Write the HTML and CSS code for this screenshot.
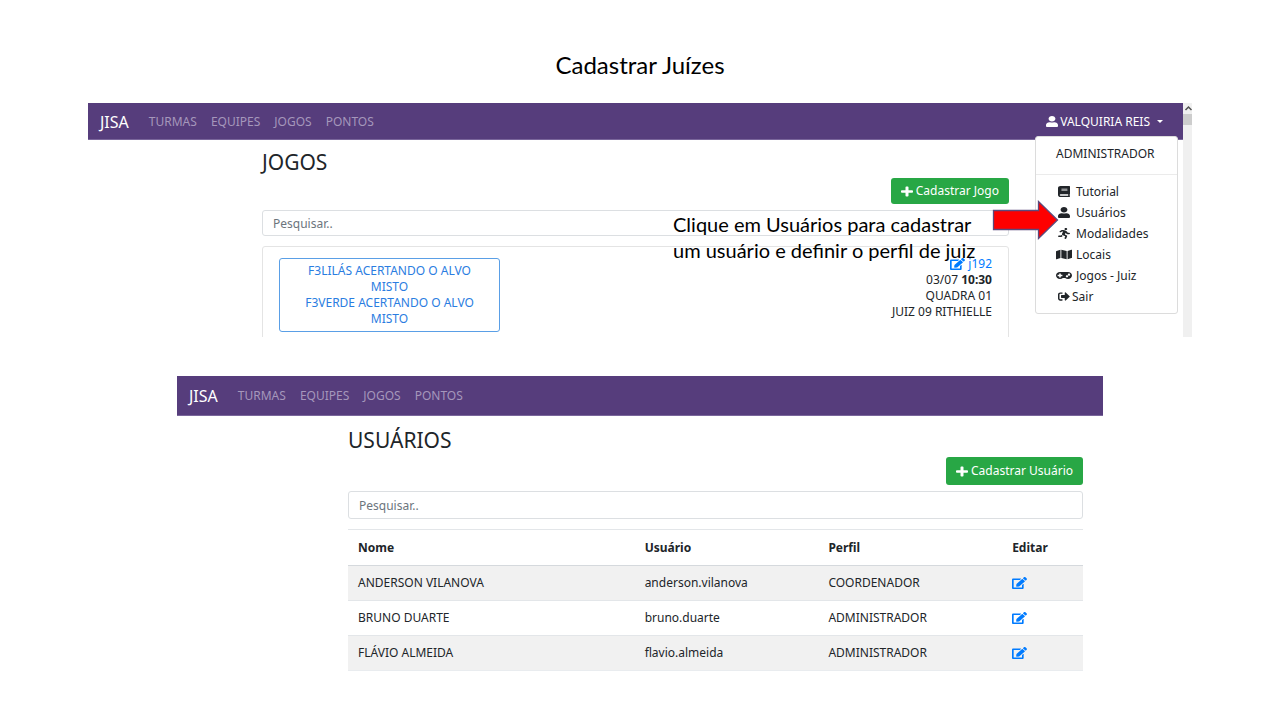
FILE: index.html
```html
<!DOCTYPE html>
<html lang="pt-BR">
<head>
<meta charset="utf-8">
<meta name="viewport" content="width=device-width, initial-scale=1">
<title>Cadastrar Juízes</title>
<link rel="stylesheet" href="styles.css">
</head>
<body>
<svg class="sprite" aria-hidden="true">
  <symbol id="user" viewBox="0 0 448 512" preserveAspectRatio="none"><path d="M224 256c70.7 0 128-57.3 128-128S294.7 0 224 0 96 57.3 96 128s57.3 128 128 128zm89.6 32h-16.7c-22.2 10.2-46.9 16-72.9 16s-50.6-5.8-72.9-16h-16.7C60.2 288 0 348.2 0 422.4V464c0 26.5 21.5 48 48 48h352c26.5 0 48-21.5 48-48v-41.6c0-74.2-60.2-134.4-134.4-134.4z"/></symbol>
  <symbol id="edit" viewBox="0 0 576 512" preserveAspectRatio="none"><path d="M402.6 83.2l90.2 90.2c3.8 3.8 3.8 10 0 13.8L274.4 405.6l-92.8 10.3c-12.4 1.4-22.9-9.1-21.5-21.5l10.3-92.8L388.8 83.2c3.8-3.8 10-3.8 13.8 0zm162-22.9l-48.8-48.8c-15.2-15.2-39.9-15.2-55.2 0l-35.4 35.4c-3.8 3.8-3.8 10 0 13.8l90.2 90.2c3.8 3.8 10 3.8 13.8 0l35.4-35.4c15.2-15.3 15.2-40 0-55.2zM384 346.2V448H64V128h229.8c3.2 0 6.2-1.3 8.5-3.5l40-40c7.6-7.6 2.2-20.5-8.5-20.5H48C21.5 64 0 85.5 0 112v352c0 26.5 21.5 48 48 48h352c26.5 0 48-21.5 48-48V306.2c0-10.7-12.9-16-20.5-8.5l-40 40c-2.2 2.3-3.5 5.3-3.5 8.5z"/></symbol>
  <symbol id="plus" viewBox="0 0 448 512" preserveAspectRatio="none"><path d="M416 200H280V56c0-17.67-14.33-32-32-32h-48c-17.67 0-32 14.33-32 32v144H32c-17.67 0-32 14.33-32 32v48c0 17.67 14.33 32 32 32h136v144c0 17.67 14.33 32 32 32h48c17.67 0 32-14.33 32-32V312h136c17.67 0 32-14.33 32-32v-48c0-17.67-14.33-32-32-32z"/></symbol>
  <symbol id="book" viewBox="0 0 448 512" preserveAspectRatio="none"><path d="M448 360V24c0-13.3-10.7-24-24-24H96C43 0 0 43 0 96v320c0 53 43 96 96 96h328c13.3 0 24-10.7 24-24v-16c0-7.5-3.5-14.3-8.9-18.7-4.2-15.4-4.2-59.3 0-74.7 5.4-4.3 8.9-11.1 8.9-18.6zM128 134c0-3.3 2.7-6 6-6h212c3.3 0 6 2.7 6 6v20c0 3.3-2.7 6-6 6H134c-3.3 0-6-2.7-6-6v-20zm0 64c0-3.3 2.7-6 6-6h212c3.3 0 6 2.7 6 6v20c0 3.3-2.7 6-6 6H134c-3.3 0-6-2.7-6-6v-20zm253.4 250H96c-17.7 0-32-14.3-32-32 0-17.6 14.4-32 32-32h285.4c-1.9 17.1-1.9 46.9 0 64z"/></symbol>
  <symbol id="running" viewBox="0 0 416 512" preserveAspectRatio="none"><path d="M272 96c26.51 0 48-21.49 48-48S298.51 0 272 0s-48 21.49-48 48 21.49 48 48 48zM113.69 317.47l-14.8 34.52H32c-17.67 0-32 14.33-32 32s14.33 32 32 32h77.45c19.25 0 36.58-11.44 44.11-29.09l8.79-20.52-10.67-6.3c-17.32-10.23-30.06-25.37-37.99-42.61zM384 223.99h-44.03l-26.06-53.25c-12.5-25.55-35.45-44.23-61.78-50.94l-71.08-21.14c-28.3-6.8-57.77-.55-80.84 17.14l-39.67 30.41c-14.03 10.75-16.69 30.83-5.92 44.86s30.84 16.66 44.86 5.92l39.69-30.41c7.67-5.89 17.44-8 25.27-6.14l14.7 4.37-37.46 87.39c-12.62 29.48-1.31 64.01 26.3 80.31l84.98 50.17-27.47 87.73c-5.28 16.86 4.11 34.82 20.97 40.09 3.19 1 6.41 1.48 9.58 1.48 13.61 0 26.23-8.77 30.52-22.45l31.64-101.06c5.91-20.77-2.89-43.08-21.64-54.39l-61.24-36.14 31.31-78.28 20.27 41.43c8 16.34 24.92 26.89 43.11 26.89H384c17.67 0 32-14.33 32-32s-14.33-31.99-32-31.99z"/></symbol>
  <symbol id="map" viewBox="0 0 576 512" preserveAspectRatio="none"><path d="M0 117.66v346.32c0 11.32 11.43 19.06 21.94 14.86L160 416V32L20.12 87.95A32.006 32.006 0 0 0 0 117.66zM192 416l192 64V96L192 32v384zM554.06 33.16L416 96v384l139.88-55.95A31.996 31.996 0 0 0 576 394.34V48.02c0-11.32-11.43-19.06-21.94-14.86z"/></symbol>
  <symbol id="gamepad" viewBox="0 0 640 512" preserveAspectRatio="none"><path d="M480 96H160C71.6 96 0 167.6 0 256s71.6 160 160 160c44.8 0 85.2-18.4 114.2-48h91.5c29 29.6 69.5 48 114.2 48 88.4 0 160-71.6 160-160S568.4 96 480 96zM256 276c0 6.6-5.4 12-12 12h-52v52c0 6.6-5.4 12-12 12h-40c-6.6 0-12-5.4-12-12v-52H76c-6.6 0-12-5.4-12-12v-40c0-6.6 5.4-12 12-12h52v-52c0-6.6 5.4-12 12-12h40c6.6 0 12 5.4 12 12v52h52c6.6 0 12 5.4 12 12v40zm184 68c-26.5 0-48-21.5-48-48s21.5-48 48-48 48 21.5 48 48-21.5 48-48 48zm80-80c-26.5 0-48-21.5-48-48s21.5-48 48-48 48 21.5 48 48-21.5 48-48 48z"/></symbol>
  <symbol id="signout" viewBox="0 0 512 512" preserveAspectRatio="none"><path d="M497 273L329 441c-15 15-41 4.5-41-17v-96H152c-13.3 0-24-10.7-24-24v-96c0-13.3 10.7-24 24-24h136V88c0-21.4 25.9-32 41-17l168 168c9.3 9.4 9.3 24.6 0 34zM192 436v-40c0-6.6-5.4-12-12-12H96c-17.7 0-32-14.3-32-32V160c0-17.7 14.3-32 32-32h84c6.6 0 12-5.4 12-12V76c0-6.6-5.4-12-12-12H96c-53 0-96 43-96 96v192c0 53 43 96 96 96h84c6.6 0 12-5.4 12-12z"/></symbol>
</svg>

<h1 class="slide-title">Cadastrar Juízes</h1>

<section class="shot shot-games">
  <div class="screen">
    <header class="navbar">
      <a class="brand" href="#">JISA</a>
      <nav class="nav-links"><a href="#">TURMAS</a><a href="#">EQUIPES</a><a href="#">JOGOS</a><a href="#">PONTOS</a></nav>
      <button class="account" type="button" aria-expanded="true"><svg class="icon"><use href="#user"/></svg>VALQUIRIA REIS<span class="caret"></span></button>
    </header>
    <main class="content">
      <h2>JOGOS</h2>
      <div class="actions"><button class="btn-add" type="button"><svg class="icon"><use href="#plus"/></svg>Cadastrar Jogo</button></div>
      <input class="search" type="text" placeholder="Pesquisar.." aria-label="Pesquisar jogos">
      <article class="card">
        <button class="match" type="button">F3LILÁS ACERTANDO O ALVO MISTO<br>F3VERDE ACERTANDO O ALVO MISTO</button>
        <div class="details">
          <a href="#"><svg class="icon icon-edit"><use href="#edit"/></svg> j192</a>
          <span>03/07 <b>10:30</b></span>
          <span>QUADRA 01</span>
          <span>JUIZ 09 RITHIELLE</span>
        </div>
      </article>
    </main>
    <div class="dropdown">
      <div class="role">ADMINISTRADOR</div>
      <ul>
        <li><a href="#"><span class="slot"><svg class="icon"><use href="#book"/></svg></span>Tutorial</a></li>
        <li><a href="#"><span class="slot"><svg class="icon"><use href="#user"/></svg></span>Usuários</a></li>
        <li><a href="#"><span class="slot"><svg class="icon"><use href="#running"/></svg></span>Modalidades</a></li>
        <li><a href="#"><span class="slot"><svg class="icon icon-wide"><use href="#map"/></svg></span>Locais</a></li>
        <li><a href="#"><span class="slot"><svg class="icon icon-wide"><use href="#gamepad"/></svg></span>Jogos - Juiz</a></li>
        <li><a class="exit" href="#"><span class="slot"><svg class="icon"><use href="#signout"/></svg></span>Sair</a></li>
      </ul>
    </div>
  </div>
  <div class="scrollbar" aria-hidden="true"><svg class="up" viewBox="0 0 9 11"><path d="M2.5 7L5.5 4l3 3" fill="none" stroke="#505050" stroke-width="1.5"/></svg><div class="thumb"></div></div>
  <p class="note">Clique em Usuários para cadastrar um usuário e definir o perfil de juiz</p>
  <svg class="arrow" viewBox="0 0 66 40" aria-hidden="true"><path d="M1 10.5H46V1.5L65 20 46 38.500V29.5H1z" fill="#fe0000" stroke="#5b4a7c" stroke-width="1.3"/></svg>
</section>

<section class="shot-users">
  <header class="navbar">
    <a class="brand" href="#">JISA</a>
    <nav class="nav-links"><a href="#">TURMAS</a><a href="#">EQUIPES</a><a href="#">JOGOS</a><a href="#">PONTOS</a></nav>
  </header>
  <main class="content">
    <h2>USUÁRIOS</h2>
    <div class="actions"><button class="btn-add" type="button"><svg class="icon"><use href="#plus"/></svg>Cadastrar Usuário</button></div>
    <input class="search" type="text" placeholder="Pesquisar.." aria-label="Pesquisar usuários">
    <table class="users">
      <colgroup><col class="c-name"><col class="c-login"><col class="c-role"><col class="c-edit"></colgroup>
      <thead><tr><th scope="col">Nome</th><th scope="col">Usuário</th><th scope="col">Perfil</th><th scope="col">Editar</th></tr></thead>
      <tbody>
        <tr><td>ANDERSON VILANOVA</td><td>anderson.vilanova</td><td>COORDENADOR</td><td><a href="#" aria-label="Editar ANDERSON VILANOVA"><svg class="icon icon-edit"><use href="#edit"/></svg></a></td></tr>
        <tr><td>BRUNO DUARTE</td><td>bruno.duarte</td><td>ADMINISTRADOR</td><td><a href="#" aria-label="Editar BRUNO DUARTE"><svg class="icon icon-edit"><use href="#edit"/></svg></a></td></tr>
        <tr><td>FLÁVIO ALMEIDA</td><td>flavio.almeida</td><td>ADMINISTRADOR</td><td><a href="#" aria-label="Editar FLÁVIO ALMEIDA"><svg class="icon icon-edit"><use href="#edit"/></svg></a></td></tr>
      </tbody>
    </table>
  </main>
</section>
</body>
</html>
```
FILE: styles.css
```css
* { box-sizing: border-box; }
body {
  margin: 0;
  padding: 47px 88px;
  background: #fff;
  color: #212529;
  font: 12px/16px "Noto Sans", sans-serif;
}
a { color: #007bff; text-decoration: none; }
button, input { font: inherit; }
.sprite { position: absolute; width: 0; height: 0; }
.icon { width: 12px; height: 11px; fill: currentColor; flex: none; vertical-align: -1px; }
.icon-wide { width: 16px; }
.icon-edit { width: 15px; height: 12px; vertical-align: -2px; }

.slide-title {
  margin: 0 0 20px;
  font: 24px/36px Lato, sans-serif;
  color: #000;
  text-align: center;
}

.shot { position: relative; display: flex; }
.shot-games { height: 234px; }
.screen { position: relative; flex: 1; overflow: hidden; }
.scrollbar { width: 9px; background: #f0f0f0; }
.scrollbar .up { display: block; height: 11px; }
.thumb { height: 11px; background: #cdcdcd; }

.navbar {
  display: flex;
  align-items: center;
  padding: 1px 12px 0;
  height: 37px;
  background: #563d7c;
  border-bottom: 1px solid #7a669b;
}
.brand { color: #fff; font-size: 16px; margin-right: 20px; }
.nav-links { display: flex; gap: 14px; }
.nav-links a { color: #a597bb; }
.account {
  display: flex;
  align-items: center;
  gap: 2px;
  margin-left: auto;
  padding: 0 8px 0 0;
  border: 0;
  background: none;
  color: #fff;
}
.caret {
  margin-left: 5px;
  border: 3px solid transparent;
  border-top-color: #fff;
  border-bottom: 0;
}

.content { padding: 10px 174px 0; }
h2 { margin: 0; font-size: 21px; line-height: 24px; font-weight: 400; }
.actions { display: flex; justify-content: flex-end; margin-top: 4px; }
.btn-add {
  display: flex;
  align-items: center;
  gap: 3px;
  padding: 5px 10px;
  border: 0;
  border-radius: 3px;
  background: #28a745;
  color: #fff;
}
.search {
  display: block;
  width: 100%;
  height: 26px;
  margin-top: 6px;
  padding: 0 10px;
  border: 1px solid #dcdfe2;
  border-radius: 3px;
  background: #fff;
}
.search::placeholder { color: #6c757d; opacity: 1; }

.card {
  display: flex;
  justify-content: space-between;
  align-items: flex-start;
  margin-top: 10px;
  padding: 11px 16px 24px;
  border: 1px solid #e4e4e4;
  border-radius: 3px;
}
.match {
  width: 31%;
  padding: 4px 16px;
  border: 1px solid #5a9fe6;
  border-radius: 3px;
  background: #fff;
  color: #2a7de1;
}
.details { display: flex; flex-direction: column; align-items: flex-end; margin-top: -2px; }

.dropdown {
  position: absolute;
  top: 33px;
  right: 5px;
  width: 143px;
  padding-bottom: 6px;
  border: 1px solid #dcdcdc;
  border-radius: 3px;
  background: #fff;
}
.role { padding: 9px 20px 12px; border-bottom: 1px solid #ebebeb; }
.dropdown ul { margin: 0; padding: 6px 0 0; list-style: none; }
.dropdown a { display: flex; align-items: center; gap: 4px; padding: 0 19px; line-height: 21px; color: #212529; }
.dropdown .exit { gap: 0; }
.slot { display: flex; justify-content: center; width: 17px; }

.note {
  position: absolute;
  top: 108px;
  left: 585px;
  width: 312px;
  margin: 0;
  font: 20px/26px Lato, sans-serif;
  color: #000;
}
.arrow { position: absolute; top: 97px; left: 904px; width: 67px; height: 40px; }

.shot-users { margin: 39px 89px 0; }
.shot-users .navbar { height: 40px; }
.shot-users .content { padding: 12px 20px 0 171px; }
.shot-users .actions { margin-top: 5px; }
.shot-users .btn-add { padding: 6px 10px; }
.shot-users .search { height: 28px; }

.users { width: 100%; margin-top: 10px; border-collapse: collapse; table-layout: fixed; border-bottom: 1px solid #e9ecef; }
.c-name { width: 39%; }
.c-login { width: 25%; }
.c-role { width: 25%; }
.c-edit { width: 11%; }
.users th, .users td { height: 35px; padding: 0 10px; text-align: left; border-top: 1px solid #e3e6e9; }
.users thead th { height: 36px; border-bottom: 1px solid #d5d9dd; }
.users tbody tr:nth-child(odd) { background: #f1f1f1; }
```
